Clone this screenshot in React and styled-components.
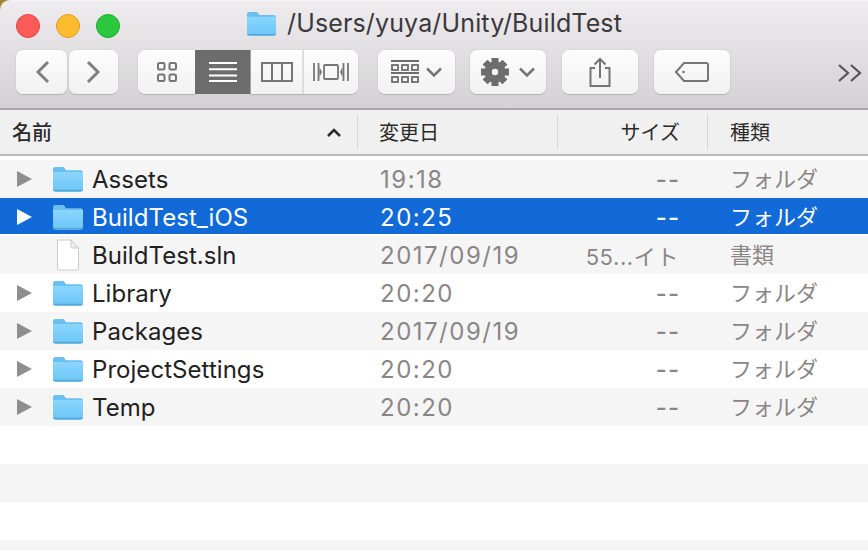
import React from 'react'
import styled, { createGlobalStyle } from 'styled-components'

const GlobalStyle = createGlobalStyle`
  html, body { margin: 0; padding: 0; background: #fff; }
  body { font-family: "Inter", "Noto Sans CJK JP", sans-serif; }
  * { box-sizing: border-box; }
`

const Window = styled.div`
  width: 868px;
  height: 550px;
  overflow: hidden;
  display: flex;
  flex-direction: column;
  background: linear-gradient(90deg, #a98435 0, #a98435 20px, #e9e7e9 21px);
`

const TitleArea = styled.div`
  height: 110px;
  flex: none;
  background: linear-gradient(#eeecee, #d3d1d3);
  border-bottom: 2px solid #a9a8a9;
  border-top: 1px solid #f6f5f6;
  border-radius: 10px 0 0 0;
  display: flex;
  flex-direction: column;
`

const TitleBar = styled.div`
  height: 49px;
  flex: none;
  display: flex;
  align-items: center;
  position: relative;
  padding: 0 16px;
  gap: 16px;
`

const Light = styled.span`
  width: 24px;
  height: 24px;
  border-radius: 50%;
  background: ${p => p.$fill};
  border: 1px solid ${p => p.$edge};
`

const Title = styled.div`
  position: absolute;
  left: 246px;
  top: 7px;
  display: flex;
  align-items: center;
  gap: 11px;
  font: 400 25px "Inter", "Noto Sans CJK JP", sans-serif;
  letter-spacing: 0.14px;
  color: #3c383c;
`

const Toolbar = styled.div`
  display: flex;
  align-items: flex-start;
  padding: 0 0 0 16px;
  position: relative;
`

const Group = styled.div`
  display: flex;
  margin-right: ${p => p.$after}px;
  gap: ${p => p.$gap || 0}px;
`

const Button = styled.div`
  width: ${p => p.$w}px;
  height: 44px;
  display: flex;
  align-items: center;
  justify-content: center;
  gap: ${p => p.$gap || 0}px;
  background: ${p => (p.$active ? '#6c6c6c' : 'linear-gradient(#fdfdfd, #f2f1f2)')};
  border-radius: ${p => p.$radius || '7px'};
  box-shadow: ${p => (p.$active ? 'none' : '0 1px 1px #b5b3b5, 0 0 0 0.5px #d2d0d2')};
  border-left: ${p => (p.$divider ? '1px solid #dcdbdc' : 'none')};
  color: ${p => p.$ink || '#757575'};
`

const More = styled.div`
  position: absolute;
  left: 838px;
  top: 14px;
  color: #555;
  line-height: 0;
`

const HeaderRow = styled.div`
  height: 46px;
  flex: none;
  display: flex;
  background: #f0f0f0;
  border-bottom: 2px solid #b9b9b9;
  font: 400 20px "Noto Sans CJK JP", sans-serif;
  color: #2b2b2b;
`

const HeaderCell = styled.div`
  width: ${p => p.$w}px;
  height: 36px;
  margin-top: 4px;
  display: flex;
  align-items: center;
  justify-content: ${p => (p.$right ? 'flex-end' : 'space-between')};
  padding: ${p => p.$pad};
  border-right: ${p => (p.$last ? 'none' : '1.5px solid #d8d8d8')};
  font-weight: ${p => (p.$bold ? 500 : 400)};
  line-height: 34px;
`

const List = styled.div`
  padding-top: 4px;
  flex: 1;
  min-height: 0;
  background: #fff;
`

const Row = styled.div`
  height: 38px;
  display: flex;
  align-items: center;
  font: 400 24px "Inter", "Noto Sans CJK JP", sans-serif;
  background: ${p => (p.$striped ? '#f5f5f5' : '#fff')};
  color: ${p => (p.$selected ? '#fff' : '#8a8686')};
  ${p => p.$selected && 'background: linear-gradient(#1269d8 0, #1269d8 36px, #fff 36px);'}
`

const Disclosure = styled.span`
  width: 52px;
  flex: none;
  padding-left: 17px;
  line-height: 0;
  color: ${p => (p.$selected ? '#fff' : '#8e8e8e')};
`

const IconCell = styled.span`
  width: 40px;
  flex: none;
  line-height: 0;
  padding-left: ${p => (p.$doc ? '4px' : '0')};
`

const Name = styled.span`
  width: 288px;
  flex: none;
  letter-spacing: 0.05px;
  color: ${p => (p.$selected ? '#fff' : '#232022')};
`

const DateCell = styled.span`
  width: 168px;
  flex: none;
  letter-spacing: 1.5px;
`

const Size = styled.span`
  width: 150px;
  flex: none;
  padding-right: ${p => (p.$doc ? '19px' : '18px')};
  text-align: right;
  font-size: ${p => (p.$doc ? '22px' : '24px')};
  font-weight: ${p => (p.$doc ? 400 : 500)};
  letter-spacing: ${p => (p.$doc ? '0.6px' : '1px')};
  white-space: nowrap;
`

const Kind = styled.span`
  padding-left: 32px;
  margin-top: -4px;
  font-family: "Noto Sans CJK JP", sans-serif;
  font-size: 22px;
  letter-spacing: 0;
  white-space: nowrap;
`

const FolderIcon = ({ w = 30, h = 25 }) => (
  <svg width={w} height={h} viewBox="0 0 30 25">
    <defs>
      <linearGradient id="folderBody" x1="0" y1="0" x2="0" y2="1">
        <stop offset="0" stopColor="#8ad6fd" />
        <stop offset="1" stopColor="#6cc6f8" />
      </linearGradient>
    </defs>
    <path d="M1 3.500C1 1.800 1.800 1 3.200 1H10c1 0 1.500.3 2.200 1.200L13.500 4H27.500C29 4 30 5 30 6.500V22c0 1.600-1 2.500-2.500 2.500h-24C2 24.500 1 23.600 1 22Z" fill="#69bff0" />
    <path d="M1 5.800H30V22c0 1.600-1 2.500-2.500 2.500h-24C2 24.500 1 23.600 1 22Z" fill="url(#folderBody)" />
    <path d="M1 23c.3 1 1.100 1.500 2.500 1.500h24c1.400 0 2.200-.5 2.500-1.500Z" fill="#58a8d6" />
  </svg>
)

const DocIcon = () => (
  <svg width="24" height="32" viewBox="0 0 24 32">
    <path d="M1.500 1H15l7.500 8V29.500a1.500 1.500 0 0 1-1.500 1.500H3a1.500 1.500 0 0 1-1.500-1.500Z" fill="#fff" stroke="#cdcdcd" />
    <path d="M15 1v6.500a1.500 1.500 0 0 0 1.500 1.500h6Z" fill="#efefef" stroke="#cdcdcd" />
  </svg>
)

const Triangle = () => (
  <svg width="15" height="16" viewBox="0 0 15 16">
    <path d="M0 0 15 8 0 16Z" fill="currentColor" />
  </svg>
)

const Stroke = ({ w, h, children, sw = 2.5 }) => (
  <svg width={w} height={h} viewBox={`0 0 ${w} ${h}`} fill="none" stroke="currentColor" strokeWidth={sw}>
    {children}
  </svg>
)

const Gear = () => (
  <svg width="28" height="28" viewBox="0 0 28 28" fill="#6d6d6d">
    {[0, 45, 90, 135, 180, 225, 270, 315].map(a => (
      <rect key={a} x="10.500" y="0" width="7" height="6" transform={`rotate(${a} 14 14)`} />
    ))}
    <path fillRule="evenodd" d="M14 3.500a10.500 10.500 0 1 1 0 21 10.500 10.500 0 0 1 0-21ZM14 10.800a3.200 3.200 0 1 0 0 6.400 3.200 3.200 0 0 0 0-6.400Z" />
  </svg>
)

const Chevron = () => (
  <Stroke w={16} h={10} sw={2.5}><path d="M1 1.500 8 8.500 15 1.500" /></Stroke>
)

const rows = [
  { name: 'Assets', date: '19:18', size: '--', kind: 'フォルダ' },
  { name: 'BuildTest_iOS', date: '20:25', size: '--', kind: 'フォルダ', selected: true },
  { name: 'BuildTest.sln', date: '2017/09/19', size: '55...イト', kind: '書類', doc: true },
  { name: 'Library', date: '20:20', size: '--', kind: 'フォルダ' },
  { name: 'Packages', date: '2017/09/19', size: '--', kind: 'フォルダ' },
  { name: 'ProjectSettings', date: '20:20', size: '--', kind: 'フォルダ' },
  { name: 'Temp', date: '20:20', size: '--', kind: 'フォルダ' },
  {}, {}, {}, {},
]

function App() {
  return (
    <Window>
      <GlobalStyle />
      <TitleArea>
        <TitleBar>
          <Light $fill="#fc5b57" $edge="#e3423e" />
          <Light $fill="#fdbb2e" $edge="#e09e1e" />
          <Light $fill="#2ac73f" $edge="#1fa92f" />
          <Title>
            <FolderIcon />
            /Users/yuya/Unity/BuildTest
          </Title>
        </TitleBar>
        <Toolbar>
          <Group $after={20} $gap={2}>
            <Button $w={51} $ink="#808080">
              <Stroke w={16} h={24} sw={3}><path d="M14 2 4 12 14 22" /></Stroke>
            </Button>
            <Button $w={49} $ink="#808080">
              <Stroke w={16} h={24} sw={3}><path d="M2 2 12 12 2 22" /></Stroke>
            </Button>
          </Group>
          <Group $after={20}>
            <Button $w={57} $radius="7px 0 0 7px">
              <Stroke w={20} h={20} sw={2}>
                <rect x="1" y="1" width="6.500" height="6.500" rx="1.500" />
                <rect x="12.500" y="1" width="6.500" height="6.500" rx="1.500" />
                <rect x="1" y="12.500" width="6.500" height="6.500" rx="1.500" />
                <rect x="12.500" y="12.500" width="6.500" height="6.500" rx="1.500" />
              </Stroke>
            </Button>
            <Button $w={56} $active $radius="0">
              <svg width="28" height="20" viewBox="0 0 28 20" stroke="#fff" strokeWidth="2">
                <path d="M0 1H28M0 7.300H28M0 13.600H28M0 19H28" />
              </svg>
            </Button>
            <Button $w={52} $radius="0">
              <Stroke w={32} h={20} sw={2}>
                <rect x="1" y="1" width="30" height="18" />
                <path d="M11 1V19M21 1V19" />
              </Stroke>
            </Button>
            <Button $w={55} $radius="0 7px 7px 0" $divider>
              <Stroke w={36} h={20} sw={1.800}>
                <path d="M1 1V19M5.500 1V19M30.500 1V19M35 1V19" />
                <rect x="11" y="3" width="14" height="14" rx="1" />
                <path d="M6.500 5 9 10 6.500 15ZM29.500 5 27 10 29.500 15Z" fill="currentColor" stroke="none" />
              </Stroke>
            </Button>
          </Group>
          <Group $after={15}>
            <Button $w={77} $gap={7}>
              <svg width="28" height="24" viewBox="0 0 28 24" fill="none" stroke="#6d6d6d" strokeWidth="1.800">
                <path d="M0 1H28M0 13H28" />
                <rect x="1" y="5" width="6" height="5" />
                <rect x="11" y="5" width="6" height="5" />
                <rect x="21" y="5" width="6" height="5" />
                <rect x="1" y="17" width="6" height="5" />
                <rect x="11" y="17" width="6" height="5" />
                <rect x="21" y="17" width="6" height="5" />
              </svg>
              <Chevron />
            </Button>
          </Group>
          <Group $after={16}>
            <Button $w={76} $gap={10}>
              <Gear />
              <Chevron />
            </Button>
          </Group>
          <Group $after={16}>
            <Button $w={76}>
              <Stroke w={22} h={30} sw={2}>
                <path d="M6 11H1.500V29H20.500V11H16M11 21V2M5.500 7.500 11 2 16.500 7.500" />
              </Stroke>
            </Button>
          </Group>
          <Group $after={0}>
            <Button $w={76}>
              <Stroke w={34} h={20} sw={2}>
                <path d="M9 1H31a2 2 0 0 1 2 2V17a2 2 0 0 1-2 2H9L1 10Z" />
                <circle cx="8.500" cy="10" r="1.300" fill="currentColor" stroke="none" />
              </Stroke>
            </Button>
          </Group>
          <More>
            <svg width="24" height="18" viewBox="0 0 24 18" fill="none" stroke="currentColor" strokeWidth="2.200">
              <path d="M1 1 10 9 1 17M13 1 22 9 13 17" />
            </svg>
          </More>
        </Toolbar>
      </TitleArea>
      <HeaderRow>
        <HeaderCell $w={358} $pad="0 16px 0 12px" $bold>
          <span>名前</span>
          <svg width="14" height="9" viewBox="0 0 14 9" fill="none" stroke="#2b2b2b" strokeWidth="2.500">
            <path d="M1 8 7 2 13 8" />
          </svg>
        </HeaderCell>
        <HeaderCell $w={200} $pad="0 0 0 21px"><span>変更日</span></HeaderCell>
        <HeaderCell $w={150} $pad="0 27px 0 0" $right><span>サイズ</span></HeaderCell>
        <HeaderCell $w={160} $pad="0 0 0 22px" $last><span>種類</span></HeaderCell>
      </HeaderRow>
      <List>
        {rows.map((r, i) => (
          <Row key={i} $striped={i % 2 === 0} $selected={r.selected}>
            {r.name && (
              <>
                <Disclosure $selected={r.selected}>{!r.doc && <Triangle />}</Disclosure>
                <IconCell $doc={r.doc}>{r.doc ? <DocIcon /> : <FolderIcon w={31} h={26} />}</IconCell>
                <Name $selected={r.selected}>{r.name}</Name>
                <DateCell>{r.date}</DateCell>
                <Size $doc={r.doc}>{r.size}</Size>
                <Kind>{r.kind}</Kind>
              </>
            )}
          </Row>
        ))}
      </List>
    </Window>
  )
}

export default App
